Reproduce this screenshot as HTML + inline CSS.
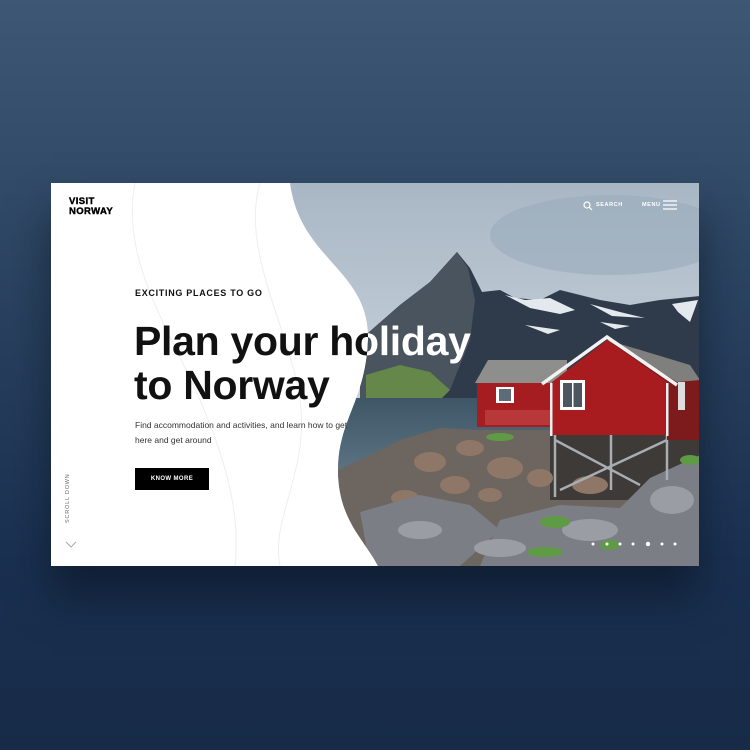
<!DOCTYPE html>
<html><head><meta charset="utf-8"><style>
html,body{margin:0;padding:0;}
body{width:750px;height:750px;overflow:hidden;position:relative;background:linear-gradient(180deg,#3d5774 0%,#2c4562 35%,#1a3050 75%,#172b48 100%);font-family:"Liberation Sans",sans-serif;}
.card{position:absolute;left:51px;top:183px;width:648px;height:383px;background:#fff;overflow:hidden;box-shadow:0 30px 40px rgba(8,16,30,.55);}
.abs{position:absolute;}
.logo{left:18px;top:14px;font-weight:900;font-size:9.5px;line-height:9.5px;letter-spacing:.4px;color:#000;-webkit-text-stroke:.4px #000;}
.kick{left:84px;top:105px;font-weight:bold;font-size:9px;letter-spacing:.7px;color:#111;}
.title{left:83px;top:136px;font-weight:bold;font-size:41px;line-height:44px;letter-spacing:-.3px;color:#111;white-space:nowrap;}
.desc{left:84px;top:235px;font-size:8.5px;line-height:15px;color:#333;}
.btn{left:84px;top:285px;width:74px;height:22px;background:#000;color:#fff;font-size:6px;font-weight:bold;letter-spacing:.4px;text-align:center;line-height:22px;}
.scroll{left:14px;top:340px;transform:rotate(-90deg);transform-origin:left top;font-size:5.5px;letter-spacing:.8px;color:#666;white-space:nowrap;}
.clipw{left:0;top:0;width:648px;height:383px;clip-path:path("M239,0 C249,77 319,87 317,157 C315,217 287,237 287,287 C287,337 314,357 327,383 L648,383 L648,0 Z");}
.nav{color:#fff;font-size:5.5px;font-weight:bold;letter-spacing:.6px;}
</style></head><body>
<div class="card">
<svg class="abs" style="left:0;top:0" width="648" height="383" viewBox="51 183 648 383">
<g fill="none" stroke="#eee" stroke-width="1">
<path d="M135,183 C120,260 170,330 200,400 C230,470 240,520 235,566"/>
<path d="M260,183 C240,250 290,330 300,400 C310,470 270,520 280,566"/>
</g>
<defs><clipPath id="cp"><path d="M290,183 C300,260 370,270 368,340 C366,400 338,420 338,470 C338,520 365,540 378,566 L699,566 L699,183 Z"/></clipPath>
<linearGradient id="sky" x1="0" y1="0" x2="0" y2="1"><stop offset="0" stop-color="#a9b7c5"/><stop offset=".5" stop-color="#c3ced8"/><stop offset="1" stop-color="#dbe2e8"/></linearGradient>
<linearGradient id="wat" x1="0" y1="0" x2="0" y2="1"><stop offset="0" stop-color="#3f5667"/><stop offset="1" stop-color="#5d7585"/></linearGradient>
</defs>
<g clip-path="url(#cp)">
<rect x="280" y="183" width="420" height="390" fill="url(#sky)"/>
<ellipse cx="610" cy="235" rx="120" ry="40" fill="#9aabba" opacity=".6"/>
<path d="M360,340 L400,305 L430,282 L457,252 L470,268 L482,292 L500,290 L515,298 L540,300 L560,290 L600,300 L630,305 L660,300 L700,296 L700,440 L360,440 Z" fill="#2f3a4b"/>
<path d="M360,340 L400,305 L430,282 L457,252 L468,268 L475,300 L470,340 L450,390 L360,400 Z" fill="#4a545f"/>
<path d="M366,375 L400,365 L430,372 L450,390 L440,400 L366,400 Z" fill="#65884a"/>
<path d="M505,295 L525,300 L550,298 L575,310 L560,314 L530,308 Z M590,304 L620,312 L645,318 L612,316 Z M672,304 L698,300 L690,322 L678,312 Z M525,325 L560,330 L548,334 Z M600,322 L630,326 L615,329 Z" fill="#e4e9ed"/>
<rect x="338" y="398" width="240" height="80" fill="url(#wat)"/>
<path d="M338,470 L370,455 L400,440 L440,428 L480,430 L700,430 L700,566 L338,566 Z" fill="#6c6560"/>
<rect x="550" y="430" width="150" height="70" fill="#3e3a38"/>
<g fill="#8f7767"><ellipse cx="430" cy="462" rx="16" ry="10"/><ellipse cx="470" cy="448" rx="14" ry="8"/><ellipse cx="505" cy="468" rx="18" ry="11"/><ellipse cx="455" cy="485" rx="15" ry="9"/><ellipse cx="405" cy="498" rx="14" ry="8"/><ellipse cx="540" cy="478" rx="13" ry="9"/><ellipse cx="590" cy="485" rx="18" ry="9"/><ellipse cx="490" cy="495" rx="12" ry="7"/></g>
<g fill="#7b7e84"><path d="M360,512 L420,495 L470,505 L500,530 L460,566 L370,566 Z"/><path d="M500,520 L560,505 L620,508 L650,478 L700,455 L700,566 L480,566 Z"/></g>
<g fill="#9a9ea4"><ellipse cx="420" cy="530" rx="22" ry="9"/><ellipse cx="590" cy="530" rx="28" ry="11"/><ellipse cx="672" cy="500" rx="22" ry="14"/><ellipse cx="500" cy="548" rx="26" ry="9"/></g>
<g fill="#5f9a45"><ellipse cx="555" cy="522" rx="15" ry="6"/><ellipse cx="545" cy="552" rx="18" ry="5"/><ellipse cx="610" cy="545" rx="10" ry="5"/><ellipse cx="500" cy="437" rx="14" ry="4"/><ellipse cx="690" cy="460" rx="10" ry="5"/></g>
<path d="M475,383 L488,360 L567,360 L567,383 Z" fill="#8e8f8c"/>
<rect x="477" y="383" width="73" height="44" fill="#a51d21"/>
<rect x="485" y="410" width="65" height="15" fill="#b8383a"/>
<rect x="496" y="387" width="18" height="16" fill="#fff"/><rect x="499" y="389" width="12" height="12" fill="#5e6c77"/>
<path d="M555,435 L555,497 M611,435 L611,490 M667,435 L667,480 M555,440 L640,485 M560,490 L667,440" stroke="#a8adb2" stroke-width="2.5" fill="none"/>
<path d="M607,340 L640,355 L700,380 L700,440 L667,440 L667,382 Z" fill="#7d1a1c"/>
<path d="M607,340 L690,365 L700,380 L677,382 Z" fill="#7f807d"/>
<path d="M607,340 L552,382 L552,435 L667,435 L667,382 Z" fill="#a81c20"/>
<path d="M542,384 L607,337 L677,385" stroke="#f2f2f2" stroke-width="3.5" fill="none"/>
<rect x="550" y="383" width="2.5" height="53" fill="#eee"/><rect x="666" y="383" width="2.5" height="53" fill="#eee"/>
<rect x="560" y="380" width="25" height="30" fill="#fff"/><rect x="563" y="383" width="19" height="24" fill="#4b5660"/><rect x="572" y="383" width="1.5" height="24" fill="#fff"/>
<rect x="678" y="382" width="7" height="28" fill="#ddd"/>
<g fill="#fff"><circle cx="593" cy="544" r="1.5"/><circle cx="607" cy="544" r="1.5"/><circle cx="620" cy="544" r="1.5"/><circle cx="633" cy="544" r="1.5"/><circle cx="648" cy="544" r="2.2"/><circle cx="662" cy="544" r="1.5"/><circle cx="675" cy="544" r="1.5"/></g>
<circle cx="587" cy="205" r="3" stroke="#fff" stroke-width="1.2" fill="none"/><path d="M589,207 L592,210" stroke="#fff" stroke-width="1.2"/>
<path d="M663,201 H677 M663,205 H677 M663,209 H677" stroke="#fff" stroke-width="1.3"/>
</g>
<path d="M66,542 L71,547 L76,542" stroke="#aaa" stroke-width="1" fill="none"/>
</svg>
<div class="abs logo">VISIT<br>NORWAY</div>
<div class="abs kick">EXCITING PLACES TO GO</div>
<div class="abs title">Plan your holiday<br>to Norway</div>
<div class="abs clipw"><div class="abs title" style="color:#fff">Plan your holiday<br>to Norway</div></div>
<div class="abs desc">Find accommodation and activities, and learn how to get<br>here and get around</div>
<div class="abs btn">KNOW MORE</div>
<div class="abs scroll">SCROLL DOWN</div>
<div class="abs nav" style="left:545px;top:19px">SEARCH</div>
<div class="abs nav" style="left:591px;top:19px">MENU</div>
</div>
</body></html>
